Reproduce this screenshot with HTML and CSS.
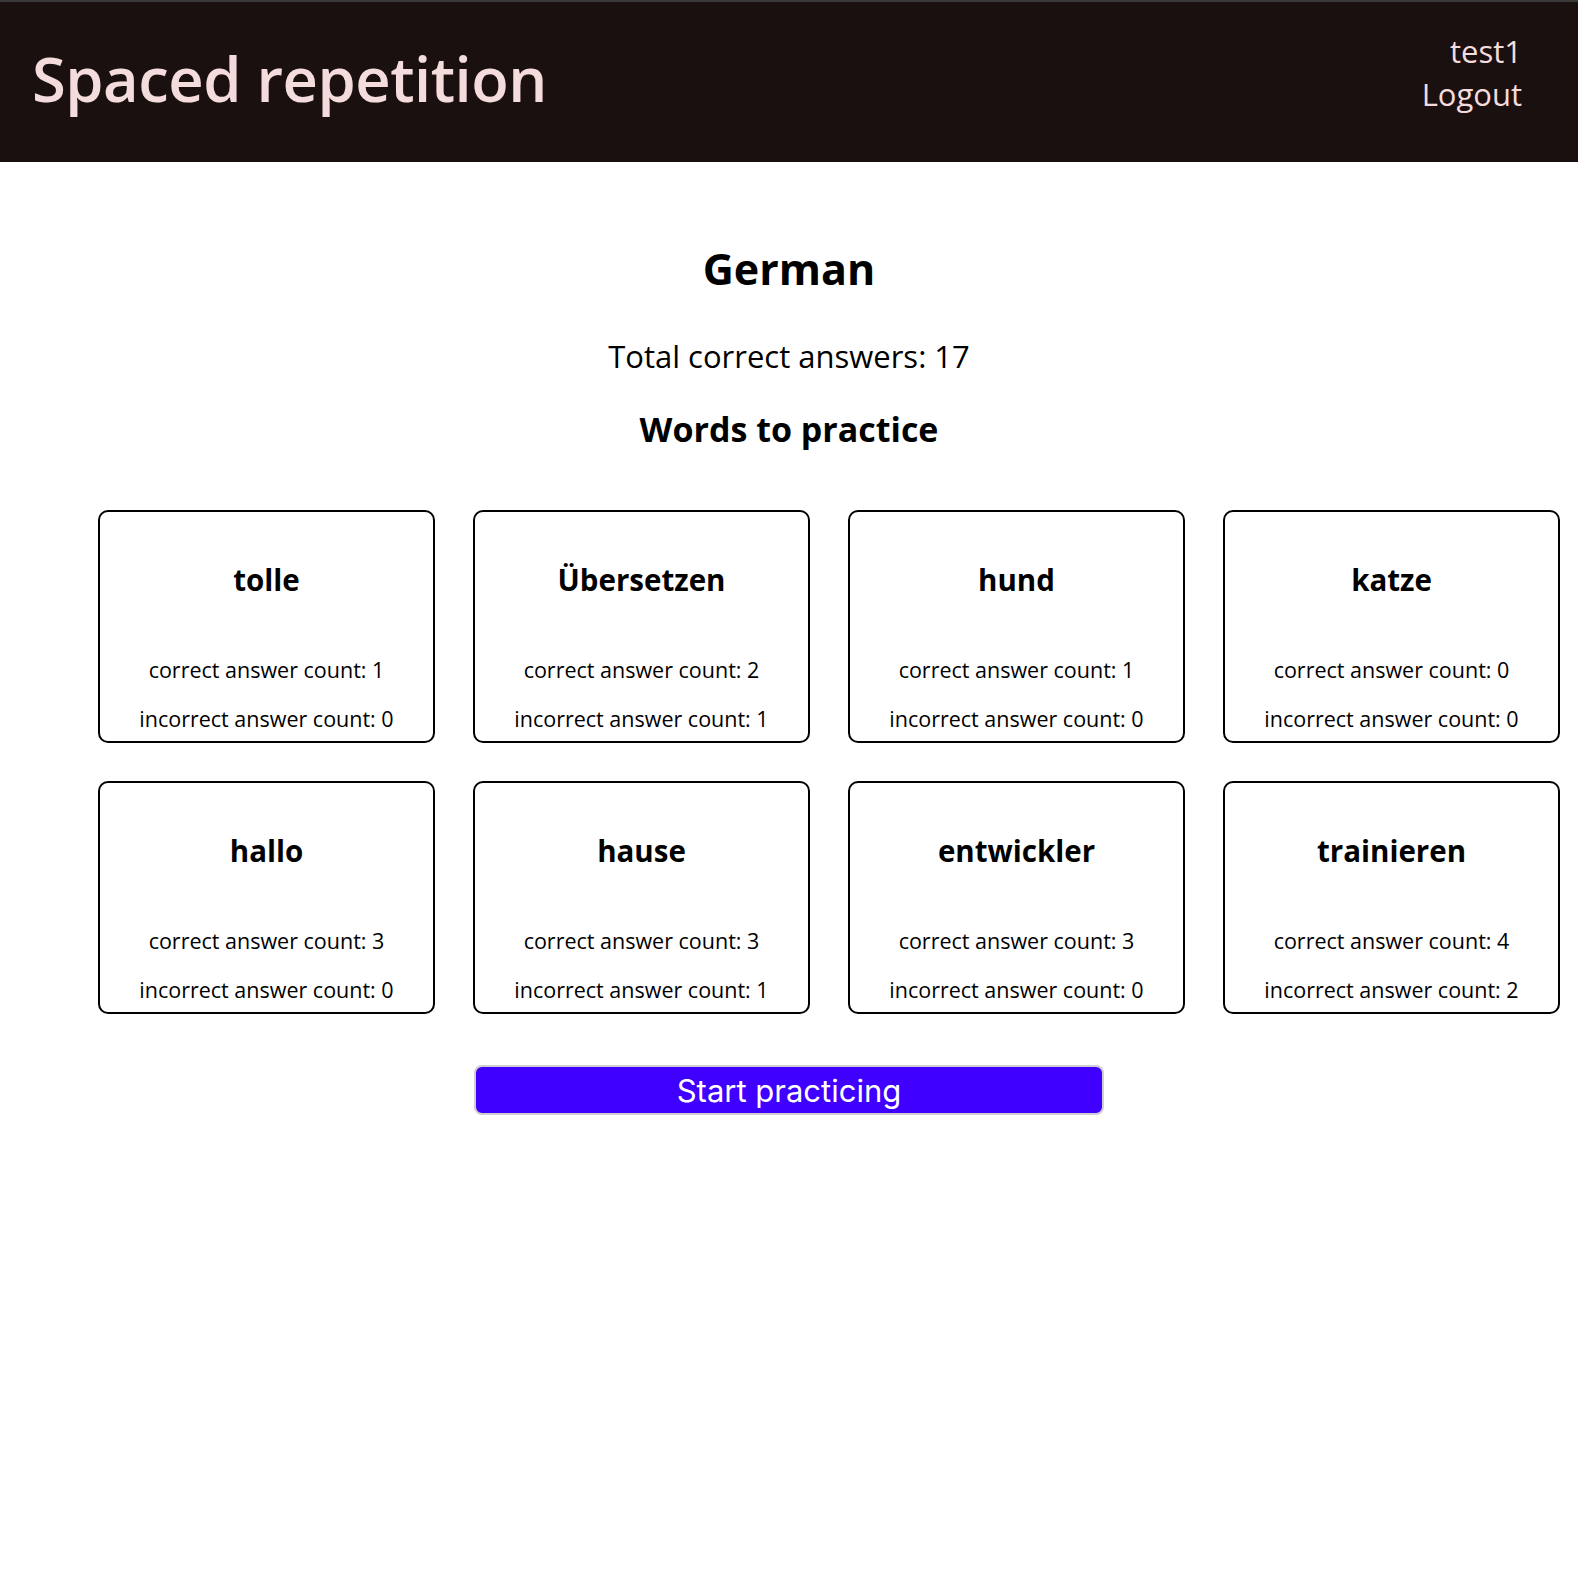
FILE: index.html
```html
<!DOCTYPE html>
<html lang="en">
<head>
<meta charset="utf-8">
<title>Spaced repetition</title>
<link rel="stylesheet" href="styles.css">
</head>
<body>
<header class="topbar">
  <h1 class="brand">Spaced repetition</h1>
  <nav class="user">
    <span class="user-name">test1</span>
    <a class="logout" href="#">Logout</a>
  </nav>
</header>
<main class="dashboard">
  <h2 class="language">German</h2>
  <p class="total">Total correct answers: 17</p>
  <h3 class="practice-title">Words to practice</h3>
  <ul class="words">
    <li class="word-card"><h4 class="word">tolle</h4><p class="count count-correct">correct answer count: 1</p><p class="count">incorrect answer count: 0</p></li>
    <li class="word-card"><h4 class="word">Übersetzen</h4><p class="count count-correct">correct answer count: 2</p><p class="count">incorrect answer count: 1</p></li>
    <li class="word-card"><h4 class="word">hund</h4><p class="count count-correct">correct answer count: 1</p><p class="count">incorrect answer count: 0</p></li>
    <li class="word-card"><h4 class="word">katze</h4><p class="count count-correct">correct answer count: 0</p><p class="count">incorrect answer count: 0</p></li>
    <li class="word-card"><h4 class="word">hallo</h4><p class="count count-correct">correct answer count: 3</p><p class="count">incorrect answer count: 0</p></li>
    <li class="word-card"><h4 class="word">hause</h4><p class="count count-correct">correct answer count: 3</p><p class="count">incorrect answer count: 1</p></li>
    <li class="word-card"><h4 class="word">entwickler</h4><p class="count count-correct">correct answer count: 3</p><p class="count">incorrect answer count: 0</p></li>
    <li class="word-card"><h4 class="word">trainieren</h4><p class="count count-correct">correct answer count: 4</p><p class="count">incorrect answer count: 2</p></li>
  </ul>
  <button class="start" type="button">Start practicing</button>
</main>
</body>
</html>
```
FILE: styles.css
```css
* { box-sizing: border-box; }

html, body {
  margin: 0;
  padding: 0;
  background: #ffffff;
}

body {
  font-family: "Open Sans", "Noto Sans", sans-serif;
  color: #000;
}

.topbar {
  height: 162px;
  background: #1b1010;
  border-top: 2px solid #3a3a3a;
  display: flex;
  align-items: center;
  justify-content: space-between;
  padding: 0 56px 0 32px;
  color: #f4dcdc;
}

.brand {
  margin: 0 0 6px;
  font-size: 61.5px;
  font-weight: 600;
  line-height: 1;
  letter-spacing: -0.5px;
  color: #f4dcdc;
}

.user {
  display: flex;
  flex-direction: column;
  align-items: flex-end;
  font-size: 31px;
  line-height: 43px;
  margin-bottom: 18px;
}

.user-name { color: #f4dcdc; }

.logout {
  color: #f4dcdc;
  text-decoration: none;
}

.dashboard {
  display: flex;
  flex-direction: column;
  align-items: center;
  padding: 80px 0 0;
}

.language {
  margin: 0;
  font-size: 43px;
  line-height: 53px;
  font-weight: 700;
}

.total {
  margin: 43px 0 0;
  font-size: 31px;
  line-height: 36px;
}

.practice-title {
  margin: 33px 0 0;
  font-size: 34px;
  line-height: 45px;
  font-weight: 700;
}

.words {
  list-style: none;
  margin: 58px 0 0;
  padding: 0 0 0 80px;
  display: grid;
  grid-template-columns: repeat(4, 337px);
  column-gap: 38px;
  row-gap: 38px;
}

.word-card {
  border: 2px solid #000;
  border-radius: 10px;
  height: 233px;
  padding: 48px 0 0;
  text-align: center;
}

.word {
  margin: 0;
  font-size: 29.5px;
  line-height: 40px;
  font-weight: 700;
}

.count {
  margin: 24px 0 0;
  font-size: 21.5px;
  line-height: 25px;
}

.count-correct { margin-top: 57px; }

.start {
  margin-top: 51px;
  width: 630px;
  height: 50px;
  background: #4000ff;
  color: #fff;
  border: 2px solid #cfcfcf;
  border-radius: 8px;
  font-family: "Inter", "Roboto", sans-serif;
  font-size: 31px;
  line-height: 1;
  padding: 0;
}
```
